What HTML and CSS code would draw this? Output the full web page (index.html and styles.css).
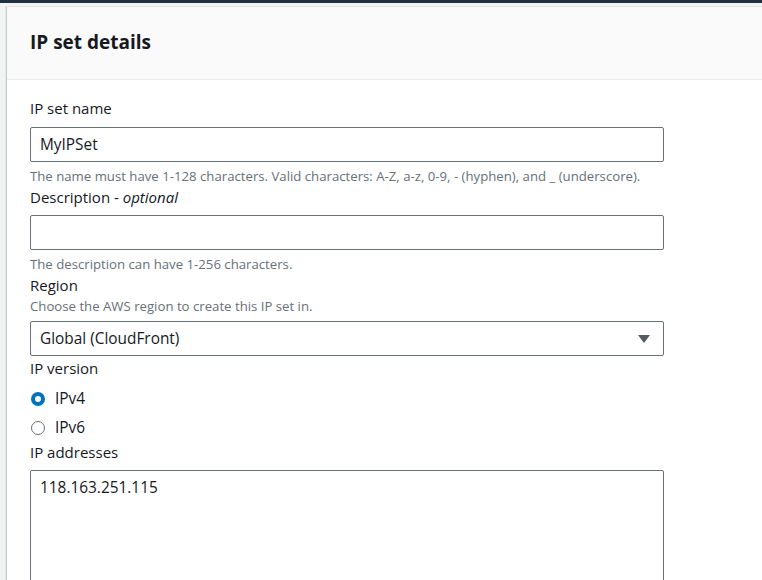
FILE: index.html
```html
<!DOCTYPE html>
<html lang="en">
<head>
<meta charset="utf-8">
<title>IP set details</title>
<link rel="stylesheet" href="styles.css">
</head>
<body>
<div class="topbar"></div>
<div class="page">
  <section class="card">
    <header class="card-header">
      <h2 class="card-title">IP set details</h2>
    </header>
    <div class="card-body">
      <div class="field f-name">
        <label class="label" for="name">IP set name</label>
        <input class="control" id="name" type="text" value="MyIPSet">
        <p class="hint">The name must have 1-128 characters. Valid characters: A-Z, a-z, 0-9, - (hyphen), and _ (underscore).</p>
      </div>
      <div class="field f-desc">
        <label class="label" for="desc">Description - <i>optional</i></label>
        <input class="control" id="desc" type="text" value="">
        <p class="hint">The description can have 1-256 characters.</p>
      </div>
      <div class="field f-region">
        <label class="label">Region</label>
        <p class="desc">Choose the AWS region to create this IP set in.</p>
        <div class="control select">
          <span>Global (CloudFront)</span>
          <svg class="caret" width="12" height="8" viewBox="0 0 12 8"><path d="M0 0h12L6 8z" fill="#545b64"/></svg>
        </div>
      </div>
      <div class="field f-version">
        <label class="label">IP version</label>
        <div class="radios">
          <div class="radio-row"><span class="radio checked"></span><span>IPv4</span></div>
          <div class="radio-row"><span class="radio"></span><span>IPv6</span></div>
        </div>
      </div>
      <div class="field f-addr">
        <label class="label" for="addr">IP addresses</label>
        <div class="control textarea">118.163.251.115</div>
      </div>
    </div>
  </section>
</div>
</body>
</html>
```
FILE: styles.css
```css
* { box-sizing: border-box; }
html, body { margin: 0; padding: 0; }
body {
  background: #f2f3f3;
  font-family: "Open Sans", "Noto Sans", sans-serif;
  color: #16191f;
  width: 762px;
  height: 580px;
  overflow: hidden;
}
.topbar {
  height: 3px;
  background: #232f3e;
}
.page {
  padding: 4px 0 0 6px;
}
.card {
  background: #fff;
  border-left: 1px solid #c6cccc;
  box-shadow: 0 0 1px rgba(0,28,36,0.3);
  height: 640px;
  overflow: hidden;
}
.card-header {
  height: 73px;
  background: #fafafa;
  border-bottom: 1px solid #eaeded;
  display: flex;
  align-items: center;
  padding: 0 23px;
}
.card-title {
  margin: 0;
  font-size: 19px;
  font-weight: 700;
  line-height: 24px;
  padding-bottom: 2px;
}
.card-body {
  padding: 18px 23px 0;
  width: 658px;
}
.field { display: flex; flex-direction: column; }
.label {
  font-size: 15px;
  line-height: 20px;
}
.label i { font-style: italic; }
.hint, .desc {
  margin: 0;
  font-size: 13.2px;
  line-height: 16px;
  color: #687078;
}
.control {
  height: 35px;
  border: 1px solid #687078;
  border-radius: 2px;
  background: #fff;
  font: inherit;
  font-size: 15.4px;
  color: #16191f;
  padding: 0 9px;
  width: 634px;
  outline: none;
}
.f-name .control { margin-top: 9px; }
.f-name .hint { margin-top: 6px; }
.f-desc { margin-top: 3px; }
.f-desc .control { margin-top: 8px; }
.f-desc .hint { margin-top: 6px; }
.f-region { margin-top: 3px; }
.f-region .desc { margin-top: 3px; }
.select {
  margin-top: 7px;
  display: flex;
  align-items: center;
  justify-content: space-between;
  padding: 0 13px 0 9px;
}
.f-version { margin-top: 2px; }
.radios {
  display: flex;
  flex-direction: column;
  margin-top: 6px;
}
.radio-row {
  display: flex;
  align-items: center;
  gap: 10px;
  height: 29px;
  font-size: 15.4px;
  padding-left: 1px;
}
.radio {
  width: 14px;
  height: 14px;
  border-radius: 50%;
  border: 1px solid #687078;
  background: #fff;
}
.radio.checked {
  border: 4px solid #0073bb;
}
.f-addr { margin-top: 0; }
.textarea {
  margin-top: 8px;
  height: 200px;
  padding: 7px 9px;
  line-height: 20px;
}
```
